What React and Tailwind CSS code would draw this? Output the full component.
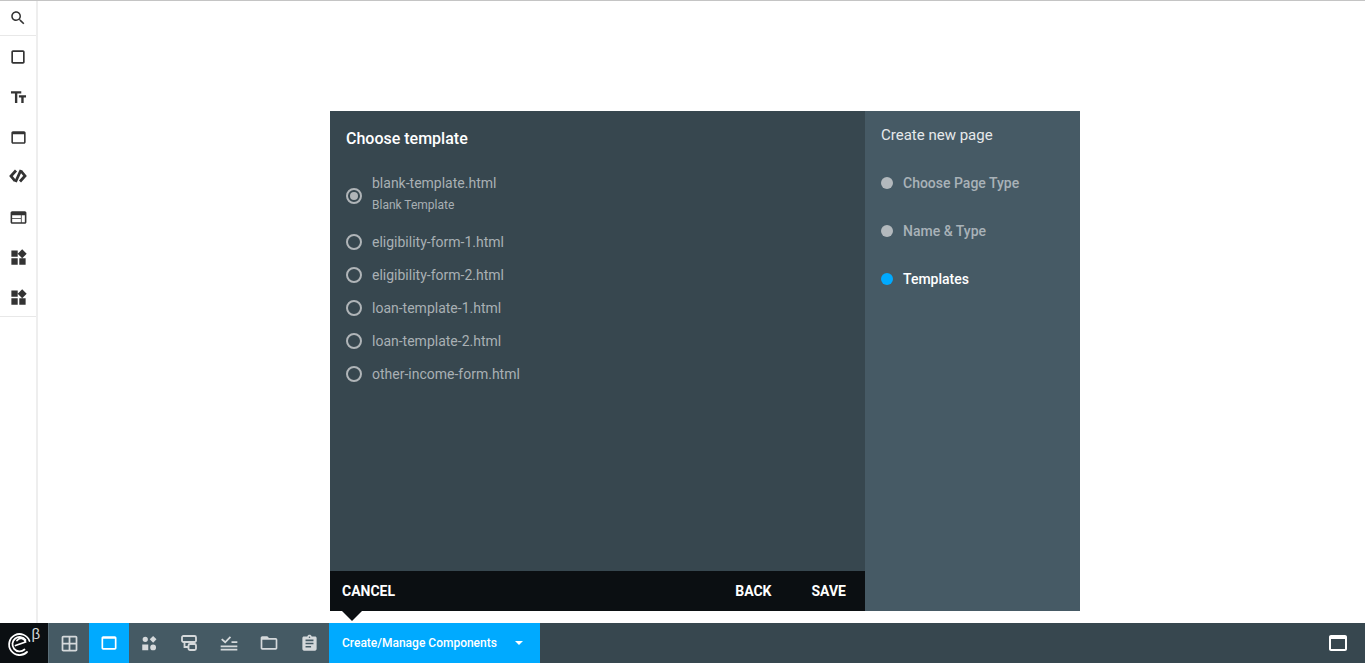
function MaterialIcon({ d, size = 18, className = "" }) {
  return (
    <svg viewBox="0 0 24 24" width={size} height={size} fill="currentColor" className={className}>
      <path d={d} />
    </svg>
  );
}

const icons = {
  search: "M15.5 14h-.79l-.28-.27C15.41 12.59 16 11.11 16 9.5 16 5.91 13.09 3 9.5 3S3 5.91 3 9.5 5.91 16 9.5 16c1.61 0 3.09-.59 4.23-1.57l.27.28v.79l5 4.99L20.49 19l-4.99-5zm-6 0C7.01 14 5 11.99 5 9.5S7.01 5 9.5 5 14 7.01 14 9.5 11.99 14 9.5 14z",
  square: "M18 4H6c-1.1 0-2 .9-2 2v12c0 1.1.9 2 2 2h12c1.1 0 2-.9 2-2V6c0-1.1-.9-2-2-2zm0 14H6V6h12v12z",
  text: "M2.5 4v3h5v12h3V7h5V4h-13zm19 5h-9v3h3v7h3v-7h3V9z",
  asset: "M19 4H5c-1.11 0-2 .9-2 2v12c0 1.1.89 2 2 2h14c1.1 0 2-.9 2-2V6c0-1.1-.89-2-2-2zm0 14H5V8h14v10z",
  window: "M19 4H5c-1.11 0-2 .9-2 2v12c0 1.1.89 2 2 2h14c1.1 0 2-.9 2-2V6c0-1.1-.89-2-2-2zm0 14H5V7h14v11z",
  web: "M20 4H4c-1.1 0-1.99.9-1.99 2L2 18c0 1.1.9 2 2 2h16c1.1 0 2-.9 2-2V6c0-1.1-.9-2-2-2zm-5 14H4v-4h11v4zm0-5H4V9h11v4zm5 5h-4V9h4v9z",
  widgets: "M13 13v8h8v-8h-8zM3 21h8v-8H3v8zM3 3v8h8V3H3zm13.66-1.31L11 7.34 16.66 13l5.66-5.66-5.66-5.65z",
  grid: "M19 3H5c-1.1 0-2 .9-2 2v14c0 1.1.9 2 2 2h14c1.1 0 2-.9 2-2V5c0-1.1-.9-2-2-2zm-8 16H5v-6h6v6zm0-8H5V5h6v6zm8 8h-6v-6h6v6zm0-8h-6V5h6v6z",
  blocks: "M7 3.500a3.500 3.500 0 1 1 0 7 3.500 3.500 0 0 1 0-7zM17.500 2.500 22 7l-4.500 4.500L13 7zM3 14h8v7.500H3zM17.500 14a3.900 3.900 0 1 1 0 7.800 3.900 3.900 0 0 1 0-7.800z",
  checklist: "M2 21h20v-2H2zM2 17h20v-2H2zM15 12h7v-2h-7zM7.500 12.500 2.500 8 4 6.500l3.500 3L13 4l1.500 1.500z",
  folder: "M20 6h-8l-2-2H4c-1.1 0-1.99.9-1.99 2L2 18c0 1.1.9 2 2 2h16c1.1 0 2-.9 2-2V8c0-1.1-.9-2-2-2zm0 12H4V8h16v10z",
  assignment: "M19 3h-4.18C14.4 1.84 13.3 1 12 1c-1.3 0-2.4.84-2.82 2H5c-1.1 0-2 .9-2 2v14c0 1.1.9 2 2 2h14c1.1 0 2-.9 2-2V5c0-1.1-.9-2-2-2zm-7 0c.55 0 1 .45 1 1s-.45 1-1 1-1-.45-1-1 .45-1 1-1zm2 14H7v-2h7v2zm3-4H7v-2h10v2zm0-4H7V7h10v2z",
};

function CodeIcon() {
  return (
    <svg viewBox="0 0 18 14" width="18" height="14" fill="none" stroke="currentColor" strokeWidth="2.800" className="-mt-[2px]">
      <path d="M7 1.500 2 7 6 12" />
      <path d="M11 12.500 16 7 12 2" />
      <path d="M12 1 6.500 13" />
    </svg>
  );
}

function FlowIcon() {
  return (
    <svg viewBox="0 0 16 16" width="16" height="16" fill="none" stroke="currentColor" strokeWidth="1.800">
      <rect x="1" y="1" width="14" height="6" rx="1.500" />
      <rect x="7.500" y="9" width="7.500" height="6" rx="1.500" />
      <path d="M3.500 7v5h4" />
    </svg>
  );
}

const sideTools = ["square", "text", "asset", "code", "web", "widgets", "widgets"];
const barTools = ["grid", "window", "blocks", "flow", "checklist", "folder", "assignment"];
const barSizes = { grid: 21, window: 20, blocks: 18, checklist: 20, folder: 20, assignment: 19 };
const templates = [
  "eligibility-form-1.html",
  "eligibility-form-2.html",
  "loan-template-1.html",
  "loan-template-2.html",
  "other-income-form.html",
];
const steps = [
  { label: "Choose Page Type" },
  { label: "Name & Type" },
  { label: "Templates", active: true },
];

function Sidebar() {
  return (
    <aside className="w-[38px] shrink-0 border-r-2 border-[#eeeeee] text-[#333333]">
      <div className="flex h-[35px] items-center justify-center border-b border-[#e8e8e8]">
        <MaterialIcon d={icons.search} size={18} />
      </div>
      <div className="h-[281px] border-b border-[#e8e8e8]">
        {sideTools.map((name, i) => (
          <div key={i} className="flex h-10 items-center justify-center pt-[2px]">
            {name === "code" ? (
              <CodeIcon />
            ) : (
              <MaterialIcon d={icons[name]} size={name === "square" ? 20 : 19} />
            )}
          </div>
        ))}
      </div>
    </aside>
  );
}

function Radio({ checked, className = "" }) {
  return (
    <span className={`flex h-4 w-4 shrink-0 items-center justify-center rounded-full border-2 border-[#b0b5b8] ${className}`}>
      {checked && <span className="h-2 w-2 rounded-full bg-[#b0b5b8]" />}
    </span>
  );
}

function TemplateDialog() {
  return (
    <div className="ml-[292px] mt-[110px] flex h-[500px] w-[750px]">
      <div className="flex w-[535px] flex-col bg-[#37474f]">
        <div className="flex-1 px-4">
          <h2 className="pt-[18px] text-base leading-5 font-medium text-white">Choose template</h2>
          <div className="mt-[24px] flex items-start gap-[10px]">
            <Radio checked className="mt-[15px]" />
            <div>
              <div className="text-sm leading-5 text-[#a9b0b4]">blank-template.html</div>
              <div className="mt-[4px] text-xs leading-4 text-[#a9b0b4]">Blank Template</div>
            </div>
          </div>
          <div className="mt-[12px]">
            {templates.map((name) => (
              <div key={name} className="flex h-[33px] items-center gap-[10px]">
                <Radio />
                <span className="text-sm text-[#a9b0b4]">{name}</span>
              </div>
            ))}
          </div>
        </div>
        <div className="relative flex h-10 items-center justify-between bg-[#0b0f12] pl-3 pr-[19px] text-sm font-bold text-white">
          <span>CANCEL</span>
          <div className="flex gap-[40px]">
            <span>BACK</span>
            <span>SAVE</span>
          </div>
          <span className="absolute left-[12px] top-full h-0 w-0 border-x-[10px] border-t-[10px] border-x-transparent border-t-[#0b0f12]" />
        </div>
      </div>
      <div className="w-[215px] bg-[#465a65] px-4">
        <h3 className="pt-[14px] text-[15px] leading-5 text-[#e6e9eb]">Create new page</h3>
        <ul className="mt-[14px]">
          {steps.map((step) => (
            <li key={step.label} className="flex h-12 items-center gap-[10px]">
              <span className={`h-3 w-3 rounded-full ${step.active ? "bg-[#00aaff]" : "bg-[#b3b9bd]"}`} />
              <span className={`text-sm font-medium ${step.active ? "text-white" : "text-[#a9b2b8]"}`}>
                {step.label}
              </span>
            </li>
          ))}
        </ul>
      </div>
    </div>
  );
}

function BottomBar() {
  return (
    <footer className="flex h-10 items-stretch bg-[#37474f]">
      <div className="flex w-[49px] items-center justify-center border-r border-[#5b6e78] bg-[#0b0f12] text-white">
        <svg viewBox="0 0 48 40" width="48" height="40" fill="none" stroke="currentColor" strokeLinecap="round">
          <path d="M27 29a10.500 10.500 0 1 1 2.500-11" strokeWidth="1.800" />
          <path d="M24.500 26.500a7.200 7.200 0 1 1 1-9.500" strokeWidth="1.800" />
          <path d="M15.500 22.500 25.500 19a4.700 4.700 0 0 0-8.500-1.500" strokeWidth="1.800" />
          <text x="31.500" y="15.500" fontSize="15" fill="#d5d9db" stroke="none" fontFamily="'Liberation Sans', sans-serif">β</text>
        </svg>
      </div>
      <div className="flex bg-[#455a64] text-[#d5d9db]">
        {barTools.map((name, i) => (
          <div
            key={i}
            className={`flex w-10 items-center justify-center ${i === 1 ? "bg-[#00aaff] text-white" : ""}`}
          >
            {name === "flow" ? <FlowIcon /> : <MaterialIcon d={icons[name]} size={barSizes[name]} />}
          </div>
        ))}
      </div>
      <div className="flex w-[211px] items-center justify-between bg-[#00aaff] pl-[13px] pr-[17px] text-xs font-medium text-white">
        <span>Create/Manage Components</span>
        <span className="h-0 w-0 border-x-4 border-t-4 border-x-transparent border-t-white" />
      </div>
      <div className="ml-auto flex w-[54px] items-center justify-center text-white">
        <MaterialIcon d={icons.asset} size={24} />
      </div>
    </footer>
  );
}

export default function App() {
  return (
    <div className="flex h-[663px] flex-col overflow-hidden border-t border-[#c4c4c4] bg-white font-['Roboto',sans-serif]">
      <div className="flex flex-1">
        <Sidebar />
        <TemplateDialog />
      </div>
      <BottomBar />
    </div>
  );
}
